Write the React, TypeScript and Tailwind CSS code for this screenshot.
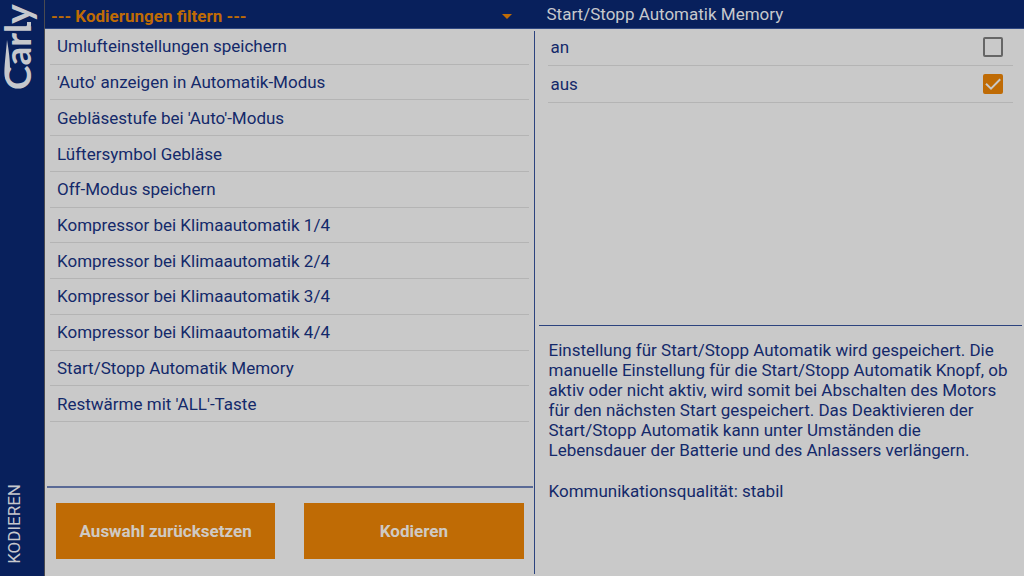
import { useState } from "react"

const codings = [
  "Umlufteinstellungen speichern",
  "'Auto' anzeigen in Automatik-Modus",
  "Gebläsestufe bei 'Auto'-Modus",
  "Lüftersymbol Gebläse",
  "Off-Modus speichern",
  "Kompressor bei Klimaautomatik 1/4",
  "Kompressor bei Klimaautomatik 2/4",
  "Kompressor bei Klimaautomatik 3/4",
  "Kompressor bei Klimaautomatik 4/4",
  "Start/Stopp Automatik Memory",
  "Restwärme mit 'ALL'-Taste",
]

const options = ["an", "aus"]

function CarlyLogo() {
  return (
    <svg width="44" height="94" viewBox="0 0 44 94" role="img" aria-label="Carly" className="overflow-visible">
      <g transform="translate(0 90) rotate(-90)" fill="#c6c8cd">
        <text x="0" y="31" fontSize="37" fontWeight="700" className="font-['Lato',sans-serif]">Carly</text>
        {/* swash on the C and foot of the l */}
        <path d="M10 6 C16 3 26 5 50 7 C38 9 30 10 20 10 Z" />
        <path d="M61 25 C61 29 62 31 65 31 L68 31 L68 27 L65 27 Z" />
      </g>
    </svg>
  )
}

function Sidebar() {
  return (
    <aside className="w-[45px] shrink-0 flex flex-col justify-between bg-[#08205c] border-r border-[#4a4a50]">
      <CarlyLogo />
      <div className="self-start ml-1 mb-3 text-[17px] leading-5 text-[#c6c8cd] [writing-mode:vertical-rl] rotate-180">
        KODIEREN
      </div>
    </aside>
  )
}

type OptionRowProps = {
  label: string
  checked: boolean
  onChange: () => void
}

function OptionRow({ label, checked, onChange }: OptionRowProps) {
  return (
    <li className="border-b border-[#b4b4b4]">
      <label className="flex h-9 items-center justify-between pl-[3px] pr-2.5">
        <span>{label}</span>
        <span className="relative flex size-5">
          <input
            type="checkbox"
            checked={checked}
            onChange={onChange}
            className="size-5 appearance-none rounded-xs border-2 border-[#666666] checked:border-[#bf6b05] checked:bg-[#bf6b05]"
          />
          {checked && (
            <svg viewBox="0 0 20 20" className="pointer-events-none absolute inset-0 size-5" fill="none" stroke="#c9c9c9" strokeWidth="2">
              <path d="M3 9.8 L8 14.6 L17.2 5.2" />
            </svg>
          )}
        </span>
      </label>
    </li>
  )
}

export default function App() {
  const [selected, setSelected] = useState("aus")

  return (
    <div className="flex h-screen overflow-hidden bg-[#c9c9c9] font-['Roboto',sans-serif] text-[17px] leading-5 text-[#14296a]">
      <Sidebar />
      <main className="grid flex-1 grid-cols-[calc(50%-1px)_1fr]">
        <section className="flex min-w-0 flex-col">
          <div className="relative border-b border-[#304882] bg-[#08205c]">
            <select
              aria-label="Kodierungen filtern"
              className="block h-7 w-full appearance-none pt-1 pl-1.5 font-bold text-[#bf6b05] outline-none"
            >
              <option>--- Kodierungen filtern ---</option>
            </select>
            <svg viewBox="0 0 10 5" className="pointer-events-none absolute top-3.5 right-[22px] h-[5px] w-2.5" fill="#bf6b05">
              <path d="M0 0 H10 L5 5 Z" />
            </svg>
          </div>

          <ul className="mx-[5px] grid h-[393px] auto-rows-fr">
            {codings.map((name) => (
              <li key={name} className="flex border-b border-[#b4b4b4]">
                <button type="button" className="w-full pl-[7px] text-left">{name}</button>
              </li>
            ))}
          </ul>

          <div className="ml-0.5 mr-px mt-auto flex gap-[29px] border-t-2 border-[#5a6a96] px-[9px] pt-[15px] pb-[17px]">
            <button type="button" className="h-14 flex-1 bg-[#bf6b05] font-bold text-[#cfcac4]">Auswahl zurücksetzen</button>
            <button type="button" className="h-14 flex-1 bg-[#bf6b05] font-bold text-[#cfcac4]">Kodieren</button>
          </div>
        </section>

        <section className="flex min-w-0 flex-col">
          <h1 className="h-[29px] border-b border-[#304882] bg-[#08205c] pt-1 pl-[13px] text-[#c6c8cd]">
            Start/Stopp Automatik Memory
          </h1>
          <div className="mt-0.5 mb-0.5 flex flex-1 flex-col border-l border-[#2c437e]">
            <ul className="-mt-0.5 mr-[11px] ml-[13px] flex-1">
              {options.map((option) => (
                <OptionRow
                  key={option}
                  label={option}
                  checked={selected === option}
                  onChange={() => setSelected(option)}
                />
              ))}
            </ul>
            <div className="mr-0.5 ml-1 border-t border-[#2c437e] pt-3.5 pr-2.5 pb-[73px] pl-2.5">
              <p>
                Einstellung für Start/Stopp Automatik wird gespeichert. Die manuelle Einstellung für die
                Start/Stopp Automatik Knopf, ob aktiv oder nicht aktiv, wird somit bei Abschalten des Motors
                für den nächsten Start gespeichert. Das Deaktivieren der Start/Stopp Automatik kann unter
                Umständen die Lebensdauer der Batterie und des Anlassers verlängern.
              </p>
              <p className="mt-[21px]">Kommunikationsqualität: stabil</p>
            </div>
          </div>
        </section>
      </main>
    </div>
  )
}
